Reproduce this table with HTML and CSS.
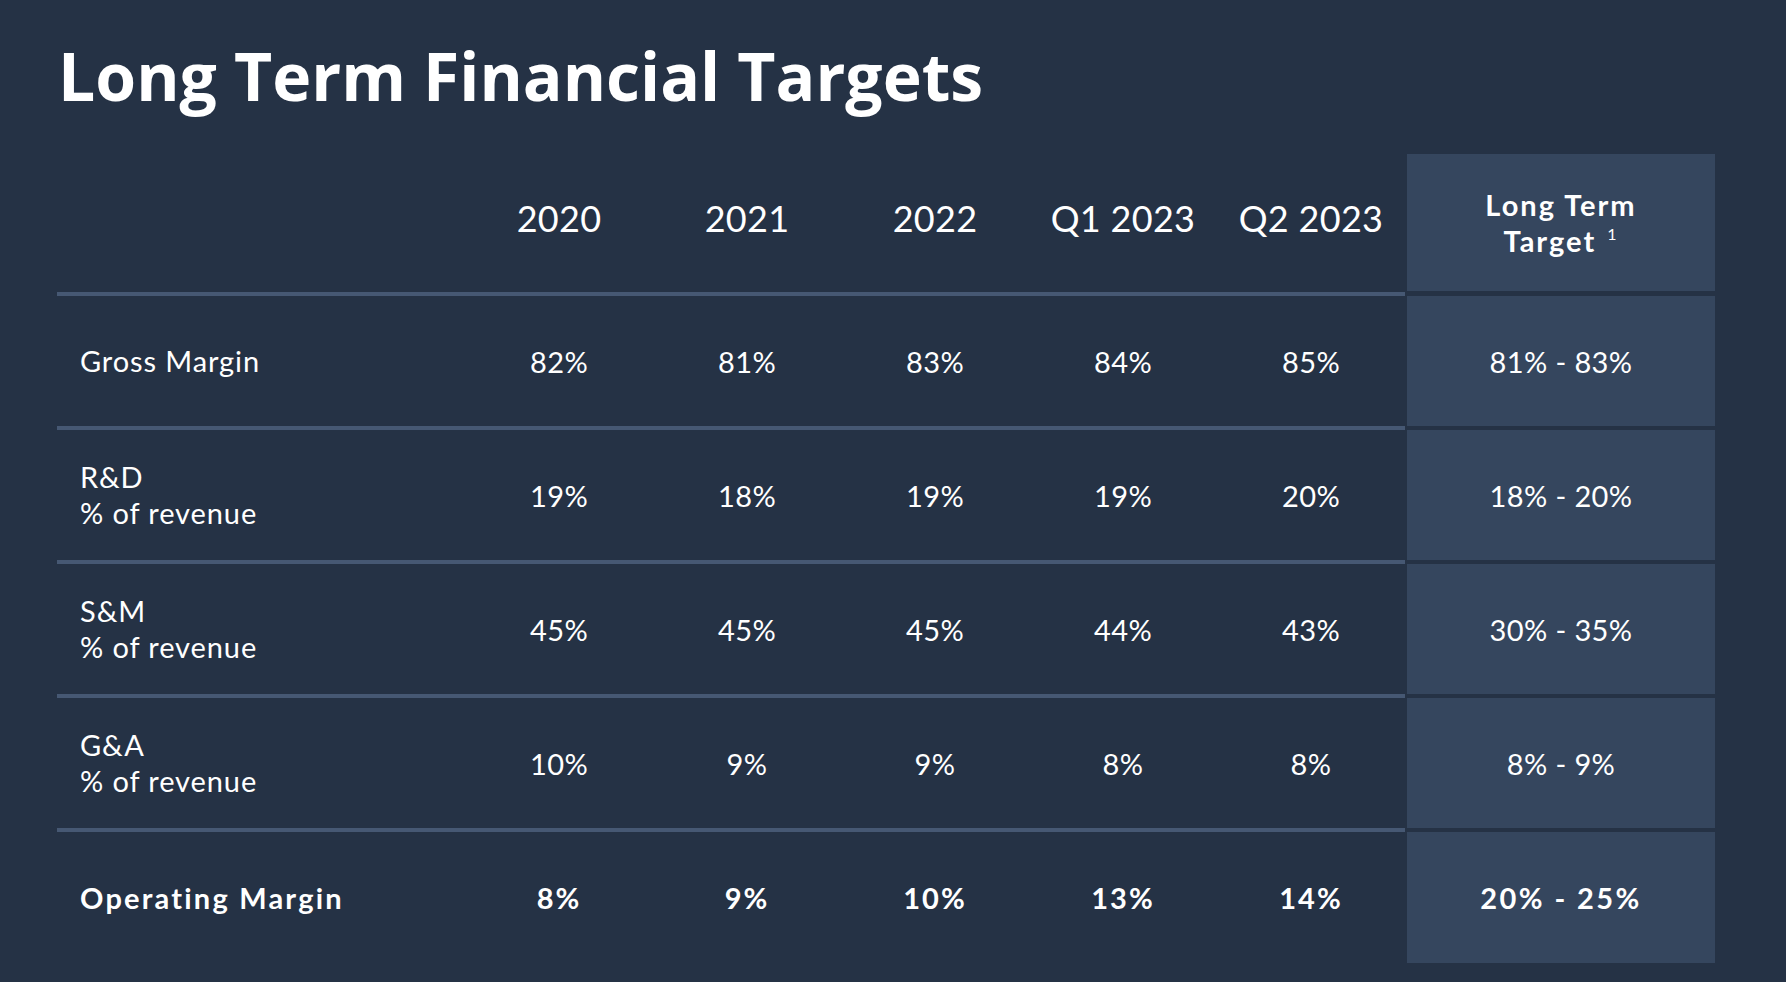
FILE: index.html
```html
<!DOCTYPE html>
<html lang="en">
<head>
<meta charset="utf-8">
<title>Long Term Financial Targets</title>
<link rel="stylesheet" href="styles.css">
</head>
<body>
<main class="slide">
  <h1 class="title">Long Term Financial Targets</h1>
  <div class="table">
    <div class="row head">
      <div class="main">
        <div class="label"></div>
        <div class="cell">2020</div>
        <div class="cell">2021</div>
        <div class="cell">2022</div>
        <div class="cell">Q1 2023</div>
        <div class="cell">Q2 2023</div>
      </div>
      <div class="target"><span class="target-text">Long Term<br>Target <sup class="note">1</sup></span></div>
    </div>
    <div class="row">
      <div class="main">
        <div class="label">Gross Margin</div>
        <div class="cell">82%</div>
        <div class="cell">81%</div>
        <div class="cell">83%</div>
        <div class="cell">84%</div>
        <div class="cell">85%</div>
      </div>
      <div class="target">81% - 83%</div>
    </div>
    <div class="row">
      <div class="main">
        <div class="label">R&amp;D<br>% of revenue</div>
        <div class="cell">19%</div>
        <div class="cell">18%</div>
        <div class="cell">19%</div>
        <div class="cell">19%</div>
        <div class="cell">20%</div>
      </div>
      <div class="target">18% - 20%</div>
    </div>
    <div class="row">
      <div class="main">
        <div class="label">S&amp;M<br>% of revenue</div>
        <div class="cell">45%</div>
        <div class="cell">45%</div>
        <div class="cell">45%</div>
        <div class="cell">44%</div>
        <div class="cell">43%</div>
      </div>
      <div class="target">30% - 35%</div>
    </div>
    <div class="row">
      <div class="main">
        <div class="label">G&amp;A<br>% of revenue</div>
        <div class="cell">10%</div>
        <div class="cell">9%</div>
        <div class="cell">9%</div>
        <div class="cell">8%</div>
        <div class="cell">8%</div>
      </div>
      <div class="target">8% - 9%</div>
    </div>
    <div class="row total">
      <div class="main">
        <div class="label">Operating Margin</div>
        <div class="cell">8%</div>
        <div class="cell">9%</div>
        <div class="cell">10%</div>
        <div class="cell">13%</div>
        <div class="cell">14%</div>
      </div>
      <div class="target">20% - 25%</div>
    </div>
  </div>
</main>
</body>
</html>
```

FILE: styles.css
```css
html, body {
  margin: 0;
  padding: 0;
  background: #253245;
}

body {
  font-family: Lato, "Open Sans", "Liberation Sans", sans-serif;
  color: #ffffff;
  width: 1786px;
  height: 982px;
  overflow: hidden;
}

.slide {
  padding: 0 0 0 57px;
}

.title {
  margin: 0;
  padding: 32px 0 0 1px;
  height: 120px;
  box-sizing: border-box;
  font-family: "Open Sans", Lato, sans-serif;
  font-size: 66px;
  font-weight: 700;
  line-height: 86px;
  letter-spacing: 0;
}

.table {
  margin-top: 34px;
  display: flex;
  flex-direction: column;
  width: 1658px;
}

.row {
  display: flex;
}

.main {
  display: flex;
  width: 1348px;
  height: 130px;
  border-top: 4px solid #465873;
  align-items: center;
}

.target {
  width: 308px;
  height: 130px;
  margin: 4px 0 0 2px;
  background: #35465e;
  display: flex;
  align-items: center;
  justify-content: center;
  text-align: center;
  font-size: 29px;
  letter-spacing: 0.4px;
}

.label {
  width: 408px;
  box-sizing: border-box;
  padding-left: 23px;
  font-size: 29px;
  line-height: 36px;
  letter-spacing: 0.9px;
}

.cell {
  width: 188px;
  text-align: center;
  font-size: 29px;
  letter-spacing: 0.4px;
}

.head .main {
  border-top: 0;
  height: 138px;
  padding-bottom: 10px;
  box-sizing: border-box;
}

.head .cell {
  font-size: 36px;
  letter-spacing: 0.3px;
}

.head .target {
  margin-top: 0;
  height: 137px;
  font-weight: 700;
  line-height: 36px;
  padding-top: 5px;
  box-sizing: border-box;
  letter-spacing: 2px;
}

.target-text {
  display: block;
}

.note {
  font-size: 16px;
  font-weight: 400;
  vertical-align: 0;
  position: relative;
  top: -12px;
  margin-left: 2px;
}

.total .main,
.total .target {
  height: 131px;
  font-weight: 700;
}

.total .label {
  letter-spacing: 2.2px;
}

.total .cell {
  letter-spacing: 2px;
}

.total .target {
  letter-spacing: 2.4px;
}
```
